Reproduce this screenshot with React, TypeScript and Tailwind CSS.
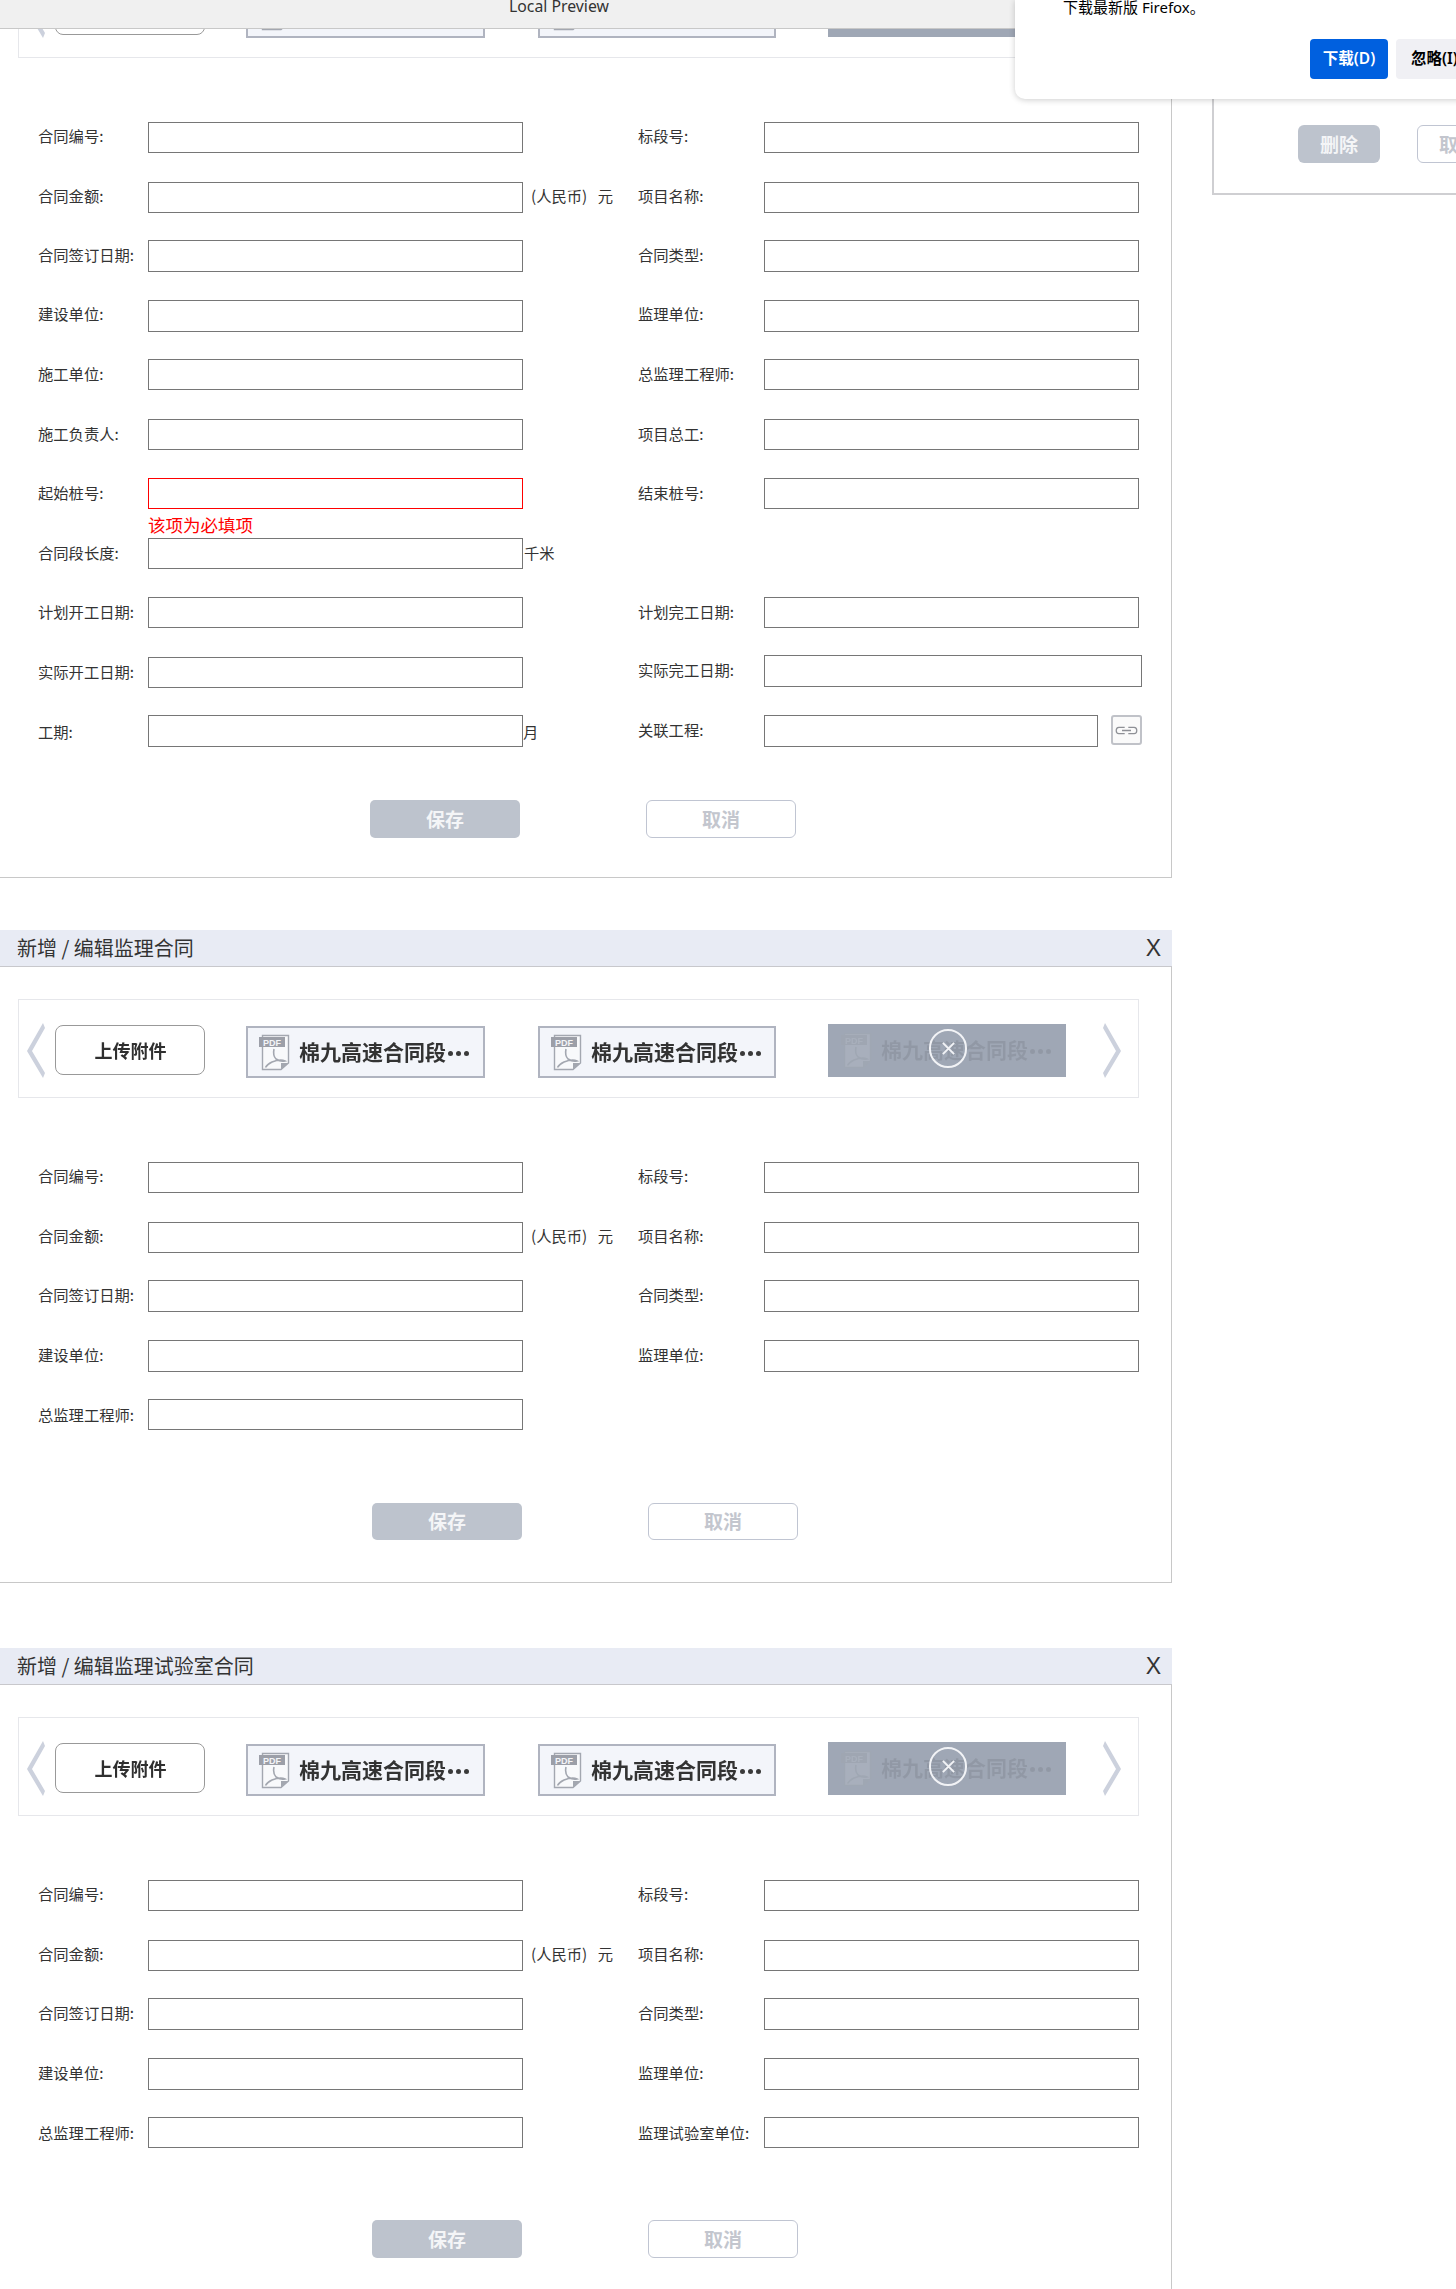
import { clsx } from "clsx";

type Field = {
  label: string;
  suffix?: string;
  suffixClass?: string;
  error?: boolean;
  inputClass?: string;
  labelClass?: string;
  cellClass?: string;
  link?: boolean;
};

type Row = {
  rowClass: string;
  labelClass: string;
  left: Field;
  right?: Field;
};

const cjk = "font-['Noto_Sans_CJK_SC','Noto_Sans',sans-serif]";

const rowsFull: Row[] = [
  { rowClass: "h-[31px]", labelClass: "leading-[26px]", left: { label: "合同编号:" }, right: { label: "标段号:" } },
  {
    rowClass: "mt-[29px] h-[31px]",
    labelClass: "leading-[26px]",
    left: { label: "合同金额:", suffix: "(人民币) 元", suffixClass: "ml-[8px] leading-[26px] [word-spacing:7px]" },
    right: { label: "项目名称:" },
  },
  { rowClass: "mt-[27px] h-[32px]", labelClass: "leading-[28px]", left: { label: "合同签订日期:" }, right: { label: "合同类型:" } },
  { rowClass: "mt-[28px] h-[32px]", labelClass: "leading-[26px]", left: { label: "建设单位:" }, right: { label: "监理单位:" } },
  { rowClass: "mt-[27px] h-[31px]", labelClass: "leading-[29px]", left: { label: "施工单位:" }, right: { label: "总监理工程师:" } },
  { rowClass: "mt-[29px] h-[31px]", labelClass: "leading-[29px]", left: { label: "施工负责人:" }, right: { label: "项目总工:" } },
  { rowClass: "mt-[28px] h-[31px]", labelClass: "leading-[29px]", left: { label: "起始桩号:", error: true }, right: { label: "结束桩号:" } },
  {
    rowClass: "mt-[29px] h-[31px]",
    labelClass: "leading-[29px]",
    left: { label: "合同段长度:", suffix: "千米", suffixClass: "ml-[1px] leading-[29px]" },
  },
  { rowClass: "mt-[28px] h-[31px]", labelClass: "leading-[29px]", left: { label: "计划开工日期:" }, right: { label: "计划完工日期:" } },
  {
    rowClass: "mt-[29px] h-[31px]",
    labelClass: "leading-[29px]",
    left: { label: "实际开工日期:" },
    right: { label: "实际完工日期:", cellClass: "-mt-[2px]", inputClass: "w-[378px] h-[32px]" },
  },
  {
    rowClass: "mt-[27px] h-[32px]",
    labelClass: "leading-[33px]",
    left: { label: "工期:", suffix: "月", suffixClass: "leading-[33px]" },
    right: { label: "关联工程:", labelClass: "leading-[28px]", inputClass: "w-[334px] h-[32px]", link: true },
  },
];

const rowsSupervise: Row[] = [
  { rowClass: "h-[31px]", labelClass: "leading-[26px]", left: { label: "合同编号:" }, right: { label: "标段号:" } },
  {
    rowClass: "mt-[29px] h-[31px]",
    labelClass: "leading-[26px]",
    left: { label: "合同金额:", suffix: "(人民币) 元", suffixClass: "ml-[8px] leading-[26px] [word-spacing:7px]" },
    right: { label: "项目名称:" },
  },
  { rowClass: "mt-[27px] h-[32px]", labelClass: "leading-[28px]", left: { label: "合同签订日期:" }, right: { label: "合同类型:" } },
  { rowClass: "mt-[28px] h-[32px]", labelClass: "leading-[28px]", left: { label: "建设单位:" }, right: { label: "监理单位:" } },
  { rowClass: "mt-[27px] h-[31px]", labelClass: "leading-[30px]", left: { label: "总监理工程师:" } },
];

const rowsLab: Row[] = rowsSupervise.map((r, i) =>
  i === 4 ? { ...r, right: { label: "监理试验室单位:" } } : r,
);

function Chevron({ flip }: { flip?: boolean }) {
  return (
    <svg viewBox="0 0 18 55" className={clsx("h-[55px] w-[18px] flex-none", flip && "-scale-x-100")}>
      <polygon points="16,0 18,5 5,28 18,50 16,55 0,28" fill="#ccd1dd" />
    </svg>
  );
}

function PdfIcon() {
  return (
    <svg viewBox="0 0 31 37" className="h-[37px] w-[31px] flex-none" fill="none">
      <path d="M3.5 1.5H29.5V29L22 35.5H3.5Z" fill="#f8f9fb" stroke="#a3a7b0" strokeWidth="1.4" />
      <path d="M22 35.5V29H29.5Z" fill="#a3a7b0" />
      <rect x="0" y="3" width="26" height="10" fill="#9c9fa8" />
      <text x="13" y="11.5" textAnchor="middle" fontSize="9" fontWeight="700" fill="#f4f5f8" className="font-['Liberation_Sans',sans-serif]">
        PDF
      </text>
      <path
        d="M15 15C14 20 15 23 17 25C20 27 24 27.5 26 27C23 25.5 18 26 13 28C10 29.5 7.5 31.5 6.5 33.5"
        stroke="#a3a7b0"
        strokeWidth="1.6"
      />
    </svg>
  );
}

function Dots({ className }: { className: string }) {
  return (
    <div className="ml-[2px] flex flex-none items-center gap-[3px] pt-[2px]">
      <span className={clsx("h-[5px] w-[5px] rounded-full", className)} />
      <span className={clsx("h-[5px] w-[5px] rounded-full", className)} />
      <span className={clsx("h-[5px] w-[5px] rounded-full", className)} />
    </div>
  );
}

function FileItem({ className }: { className: string }) {
  return (
    <div className={clsx("flex h-[52px] flex-none items-center border-2 border-[#b0b4c0] bg-[#f3f5fa] pl-[11px]", className)}>
      <PdfIcon />
      <span className="ml-[9px] -translate-y-[1px] whitespace-nowrap text-[21px] leading-[28px] font-bold text-[#333] blur-[0.3px]">
        棉九高速合同段
      </span>
      <Dots className="bg-[#3a3a3a]" />
    </div>
  );
}

function DeletingItem() {
  return (
    <div className="relative mt-[1px] ml-[52px] h-[53px] w-[238px] flex-none bg-[#9fa7b5]">
      <div className="flex h-full items-center pl-[13px] opacity-[0.1] grayscale">
        <PdfIcon />
        <span className="ml-[9px] -translate-y-[2px] whitespace-nowrap text-[21px] leading-[28px] font-bold text-[#222] blur-[0.5px]">
          棉九高速合同段
        </span>
        <Dots className="bg-[#222]" />
      </div>
      <div className="absolute top-[5px] left-[101px] flex h-[39px] w-[38px] items-center justify-center rounded-full border-2 border-[#f2f3f6]">
        <svg viewBox="0 0 16 16" className="h-[15px] w-[15px]" stroke="#f2f3f6" strokeWidth="2">
          <path d="M2 2L14 14M14 2L2 14" />
        </svg>
      </div>
    </div>
  );
}

function Carousel() {
  return (
    <div className={clsx("flex h-[99px] w-[1121px] items-start border border-[#e6e7eb] pt-[23px] pl-[8px]", cjk)}>
      <Chevron />
      <div className="mt-[2px] ml-[10px] flex h-[50px] w-[150px] flex-none items-center justify-center rounded-[8px] border border-[#999] pl-[1px] text-[18px] leading-none font-bold text-[#2f2f2f] blur-[0.3px]">
        上传附件
      </div>
      <FileItem className="mt-[3px] ml-[41px] w-[239px]" />
      <FileItem className="mt-[3px] ml-[53px] w-[238px]" />
      <DeletingItem />
      <div className="ml-[37px]">
        <Chevron flip />
      </div>
    </div>
  );
}

function LinkButton() {
  return (
    <div className="ml-[13px] flex h-[30px] w-[31px] flex-none items-center justify-center rounded-[3px] border-2 border-[#c0c2c8] bg-[#fafafa]">
      <svg viewBox="0 0 24 10" className="h-[9px] w-[23px]" fill="none" stroke="#8e9096" strokeWidth="1.4">
        <path d="M10 1.5H3.5A2.5 3 0 0 0 3.5 8.5H10M14 1.5H20.5A2.5 3 0 0 1 20.5 8.5H14M7 5H17" />
      </svg>
    </div>
  );
}

function Input({ error, className }: { error?: boolean; className?: string }) {
  return (
    <div
      className={clsx(
        "flex-none border bg-white",
        error ? "border-[#ff0000]" : "border-[#767676]",
        className ?? "h-full w-[375px]",
      )}
    />
  );
}

function Form({ rows }: { rows: Row[] }) {
  return (
    <div className={clsx("text-[15.3px] text-[#333]", cjk)}>
      {rows.map((row) => (
        <div key={row.left.label} className={clsx("flex items-start", row.rowClass)}>
          <div className="relative flex h-full w-[638px] flex-none items-start pl-[38px]">
            <span className={clsx("w-[110px] flex-none whitespace-nowrap", row.labelClass)}>{row.left.label}</span>
            <Input error={row.left.error} />
            {row.left.suffix && (
              <span className={clsx("whitespace-nowrap", row.left.suffixClass)}>{row.left.suffix}</span>
            )}
            {row.left.error && (
              <span className="absolute top-[37px] left-[148px] text-[17.5px] leading-[20px] whitespace-nowrap text-[#ff0000]">
                该项为必填项
              </span>
            )}
          </div>
          {row.right && (
            <div className={clsx("flex h-full items-start", row.right.cellClass)}>
              <span className={clsx("w-[126px] flex-none whitespace-nowrap", row.right.labelClass ?? row.labelClass)}>
                {row.right.label}
              </span>
              <Input className={row.right.inputClass} />
              {row.right.link && <LinkButton />}
            </div>
          )}
        </div>
      ))}
    </div>
  );
}

function Actions({ className, h }: { className: string; h: string }) {
  return (
    <div className={clsx("flex text-[19px] font-bold", cjk, className)}>
      <div className={clsx("flex w-[150px] items-center justify-center rounded-[5px] bg-[#bdc3cd] text-[#f4f5f7]", h)}>保存</div>
      <div className={clsx("ml-[126px] flex w-[150px] items-center justify-center rounded-[6px] border border-[#c0c5d2] text-[#c3c6ce]", h)}>
        取消
      </div>
    </div>
  );
}

function Section({
  title,
  className,
  bodyClass,
  rows,
  actionsClass,
  actionsH,
}: {
  title?: string;
  className: string;
  bodyClass: string;
  rows: Row[];
  actionsClass: string;
  actionsH: string;
}) {
  return (
    <section className={className}>
      {title && (
        <div className={clsx("flex h-[37px] items-center justify-between border-b border-[#c8c8cc] bg-[#e8ebf4] pr-[11px] pl-[17px] text-[#333]", cjk)}>
          <span className="text-[20px] leading-[38px]">{title}</span>
          <span className="font-['Liberation_Sans',sans-serif] text-[23px] leading-[34px]">X</span>
        </div>
      )}
      <div className={clsx("border-r border-b border-[#c8c8c8]", bodyClass)}>
        <div className="pl-[18px]">
          <Carousel />
        </div>
        <div className="mt-[64px]">
          <Form rows={rows} />
        </div>
        <Actions className={actionsClass} h={actionsH} />
      </div>
    </section>
  );
}

export default function App() {
  return (
    <div className="relative flex h-[2289px] w-[1456px] items-start overflow-hidden bg-white">
      <div className="w-[1172px] flex-none">
        {/* first form is scrolled, its header is above the fold */}
        <Section
          className="-mt-[41px]"
          bodyClass="pb-[39px]"
          rows={rowsFull}
          actionsClass="mt-[53px] ml-[370px]"
          actionsH="h-[38px]"
        />
        <Section
          title="新增 / 编辑监理合同"
          className="mt-[52px]"
          bodyClass="pt-[32px] pb-[42px]"
          rows={rowsSupervise}
          actionsClass="mt-[73px] ml-[372px]"
          actionsH="h-[37px]"
        />
        <Section
          title="新增 / 编辑监理试验室合同"
          className="mt-[65px]"
          bodyClass="pt-[32px] pb-[60px]"
          rows={rowsLab}
          actionsClass="mt-[72px] ml-[372px]"
          actionsH="h-[38px]"
        />
      </div>

      {/* panel behind the update notice */}
      <div className={clsx("ml-[40px] flex h-[195px] w-[300px] flex-none items-start border-b-2 border-l-2 border-[#cfcfd2] pt-[125px] pl-[84px] text-[19px] font-bold", cjk)}>
        <div className="flex h-[38px] w-[82px] flex-none items-center justify-center rounded-[6px] bg-[#bdc3cd] text-[#f4f5f7]">删除</div>
        <div className="ml-[37px] flex h-[38px] w-[82px] flex-none items-center justify-center rounded-[6px] border border-[#c0c5d2] text-[#c3c6ce]">取消</div>
      </div>

      {/* preview bar, scrolled over the first form */}
      <div className="absolute top-0 left-0 h-[29px] w-[1016px] border-b border-[#c8c8c8] bg-[#f0f0f0]">
        <div className="-mt-[4px] ml-[509px] font-['Noto_Sans',sans-serif] text-[15.8px] leading-[20px] text-[#333]">Local Preview</div>
      </div>

      {/* update notice */}
      <div className="absolute top-0 left-[1015px] h-[99px] w-[460px] rounded-bl-[10px] bg-white font-['Noto_Sans','Noto_Sans_CJK_SC',sans-serif] shadow-[0_1px_6px_rgba(0,0,0,0.2)]">
        <div className="-mt-[3px] ml-[48px] text-[15px] leading-[20px] text-black">下载最新版 Firefox。</div>
        <div className="mt-[22px] ml-[295px] flex text-[15.5px] font-semibold">
          <div className="flex h-[40px] w-[83px] items-center justify-center rounded-[4px] bg-[#0060df] text-white">下载(D)</div>
          <div className="ml-[8px] flex h-[40px] w-[83px] items-center rounded-[4px] bg-[#f0f0f4] pl-[15px] text-black">忽略(I)</div>
        </div>
      </div>
    </div>
  );
}
